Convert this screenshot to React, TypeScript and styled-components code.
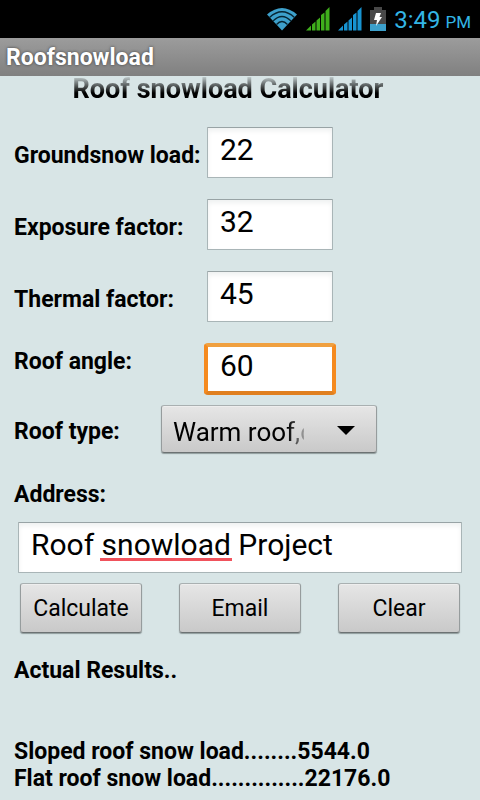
import React, { useState } from "react";
import styled, { createGlobalStyle, css } from "styled-components";

const GlobalStyle = createGlobalStyle`
  *, *::before, *::after { box-sizing: border-box; }
  body {
    margin: 0;
    background: #d8e5e6;
    color: #000;
    font-family: Roboto, "Noto Sans", sans-serif;
  }
  input, select, button { font-family: inherit; color: inherit; margin: 0; outline: none; }
`;

const Screen = styled.div`
  display: flex;
  flex-direction: column;
  min-height: 100vh;
  overflow: hidden;
`;

const StatusBar = styled.header`
  display: flex;
  justify-content: flex-end;
  align-items: center;
  gap: 8px;
  height: 38px;
  padding: 0 9px 0 0;
  background: #000;
`;

const Clock = styled.time`
  display: flex;
  align-items: baseline;
  gap: 5px;
  padding-top: 4px;
  font-size: 24px;
  line-height: 38px;
  color: #33b5e5;
`;

const Meridiem = styled.span`
  font-size: 17px;
`;

const TitleBar = styled.div`
  height: 38px;
  padding: 0 6px;
  background: linear-gradient(#9c9c9c, #808080);
  color: #fff;
  font-size: 23px;
  font-weight: 700;
  line-height: 40px;
  text-shadow: 0 0 3px rgba(0, 0, 0, 0.6);
`;

const Content = styled.main`
  display: flex;
  flex-direction: column;
`;

const Heading = styled.h1`
  margin: 0 0 10px;
  height: 30px;
  padding-right: 24px;
  font-size: 27px;
  font-weight: 700;
  line-height: 26px;
  text-align: center;
  color: transparent;
  background: linear-gradient(#c9d5d6, #000 17px);
  background-clip: text;
`;

const Row = styled.div<{ $align?: string }>`
  display: flex;
  align-items: ${(p) => p.$align ?? "center"};
  padding: 11px 14px 10px;
`;

const TypeRow = styled(Row)`
  padding: 0 14px;
`;

const labelText = css`
  font-size: 23px;
  font-weight: 700;
  line-height: 27px;
`;

const Label = styled.label<{ $width: number }>`
  ${labelText}
  flex: 0 0 ${(p) => p.$width}px;
  padding-top: 5px;
  white-space: nowrap;
`;

const AddressLabel = styled.label`
  ${labelText}
  margin: 28px 14px 14px;
`;

const TextBox = styled.input<{ $focused?: boolean }>`
  width: 126px;
  height: 51px;
  padding: 0 12px 7px;
  border: 1px solid #a9b5b7;
  border-top-color: #98a3a5;
  border-radius: 1px;
  background: #fff;
  box-shadow: inset 0 3px 5px #eff1f1;
  font-size: 30px;
  ${(p) =>
    p.$focused &&
    css`
      width: 132px;
      height: 52px;
      margin-left: -3px;
      border: 4px solid #f08a20;
      border-color: #f0a040 #f58a1f #e08020;
      border-radius: 4px;
      box-shadow: none;
    `}
`;

const AddressField = styled.div`
  position: relative;
  display: flex;
  margin: 0 18px;
`;

const AddressBox = styled(TextBox)`
  flex: 1;
  min-width: 0;
`;

const SpellingMark = styled.span`
  position: absolute;
  left: 82px;
  top: 36px;
  width: 132px;
  height: 3px;
  background: #f0525c;
  pointer-events: none;
`;

const raised = css`
  border: 1px solid #8b9293;
  border-color: #a9b0b1 #969c9d #6c7273;
  border-radius: 3px;
  background: linear-gradient(#e6e6e6, #c9c9c9);
  box-shadow: 0 1px 1px rgba(70, 80, 80, 0.5), inset 0 1px 0 #eeeeee;
`;

const Spinner = styled.div`
  ${raised}
  position: relative;
  display: flex;
  width: 216px;
  height: 48px;
`;

const Select = styled.select`
  appearance: none;
  width: 100%;
  padding: 6px 72px 0 11px;
  border: 0;
  background: transparent;
  font-size: 26px;
  mask-image: linear-gradient(to right, #000 126px, rgba(0, 0, 0, 0.2) 143px);
`;

const Arrow = styled.svg`
  position: absolute;
  right: 21px;
  top: 20px;
  pointer-events: none;
`;

const Actions = styled.div`
  display: flex;
  justify-content: space-between;
  margin: 10px 20px 0;
`;

const ActionButton = styled.button`
  ${raised}
  width: 122px;
  height: 50px;
  padding: 0;
  font-size: 23px;
`;

const Results = styled.section`
  ${labelText}
  padding: 24px 14px 8px;
`;

const ResultsTitle = styled.h2`
  ${labelText}
  margin: 0 0 54px;
`;

const ResultLine = styled.p`
  margin: 0;
  white-space: nowrap;
`;

const WifiIcon = () => (
  <svg width="32" height="24" viewBox="0 0 32 24" aria-hidden="true">
    <path d="M1 7.500 Q16 -5.500 31 7.500 L16 23.500Z" fill="#3da0cb" />
    <g fill="none" stroke="#062431" strokeWidth="1.300">
      <path d="M3.500 10.500Q16 -1 28.500 10.500" />
      <path d="M7 14Q16 5 25 14" />
      <path d="M10.500 17.500Q16 11.500 21.500 17.500" />
    </g>
  </svg>
);

const SignalIcon = ({ color }: { color: string }) => (
  <svg width="24" height="24" viewBox="0 0 24 24" fill={color} aria-hidden="true">
    <path d="M0 23.500 5 18.500V23.500Z" />
    <path d="M6 17.500 9.500 14.500V23.500H6Z" />
    <path d="M10.500 13.500 14 10.500V23.500H10.500Z" />
    <path d="M15 8 18.500 5.500V23.500H15Z" />
    <path d="M19.500 4 23.500 0V23.500H19.500Z" />
  </svg>
);

const BatteryIcon = () => (
  <svg width="16" height="24" viewBox="0 0 16 24" aria-hidden="true">
    <path d="M4 0H12V3H16V24H0V3H4Z" fill="#484848" />
    <path d="M0 17H16V24H0Z" fill="#3da0cb" />
    <path d="M6 6H11L9.500 10H12L6 19L7 13H4Z" fill="#fff" />
  </svg>
);

const factors = [
  { id: "ground", label: "Groundsnow load:", value: "22" },
  { id: "exposure", label: "Exposure factor:", value: "32" },
  { id: "thermal", label: "Thermal factor:", value: "45" },
  { id: "angle", label: "Roof angle:", value: "60" },
];

export default function App() {
  const [values, setValues] = useState<Record<string, string>>(
    Object.fromEntries(factors.map((f) => [f.id, f.value]))
  );
  const [address, setAddress] = useState("Roof snowload Project");

  return (
    <Screen>
      <GlobalStyle />
      <StatusBar>
        <WifiIcon />
        <SignalIcon color="#3fae1c" />
        <SignalIcon color="#1793d1" />
        <BatteryIcon />
        <Clock>
          3:49 <Meridiem>PM</Meridiem>
        </Clock>
      </StatusBar>
      <TitleBar>Roofsnowload</TitleBar>
      <Content>
        <Heading>Roof snowload Calculator</Heading>
        {factors.map((f) => (
          <Row key={f.id} $align={f.id === "angle" ? "flex-start" : "center"}>
            <Label htmlFor={f.id} $width={193}>
              {f.label}
            </Label>
            <TextBox
              id={f.id}
              inputMode="decimal"
              $focused={f.id === "angle"}
              value={values[f.id]}
              onChange={(e) => setValues({ ...values, [f.id]: e.target.value })}
            />
          </Row>
        ))}
        <TypeRow>
          <Label htmlFor="type" $width={147}>
            Roof type:
          </Label>
          <Spinner>
            <Select id="type">
              <option>Warm roof,cold roof</option>
            </Select>
            <Arrow width="18" height="10" viewBox="0 0 18 10" aria-hidden="true">
              <path d="M0 0H18L9 9Z" fill="#000" />
            </Arrow>
          </Spinner>
        </TypeRow>
        <AddressLabel htmlFor="address">Address:</AddressLabel>
        <AddressField>
          <AddressBox
            id="address"
            spellCheck={false}
            value={address}
            onChange={(e) => setAddress(e.target.value)}
          />
          <SpellingMark />
        </AddressField>
        <Actions>
          <ActionButton type="button">Calculate</ActionButton>
          <ActionButton type="button">Email</ActionButton>
          <ActionButton type="button">Clear</ActionButton>
        </Actions>
        <Results>
          <ResultsTitle>Actual Results..</ResultsTitle>
          <ResultLine>Sloped roof snow load........5544.0</ResultLine>
          <ResultLine>Flat roof snow load..............22176.0</ResultLine>
        </Results>
      </Content>
    </Screen>
  );
}
